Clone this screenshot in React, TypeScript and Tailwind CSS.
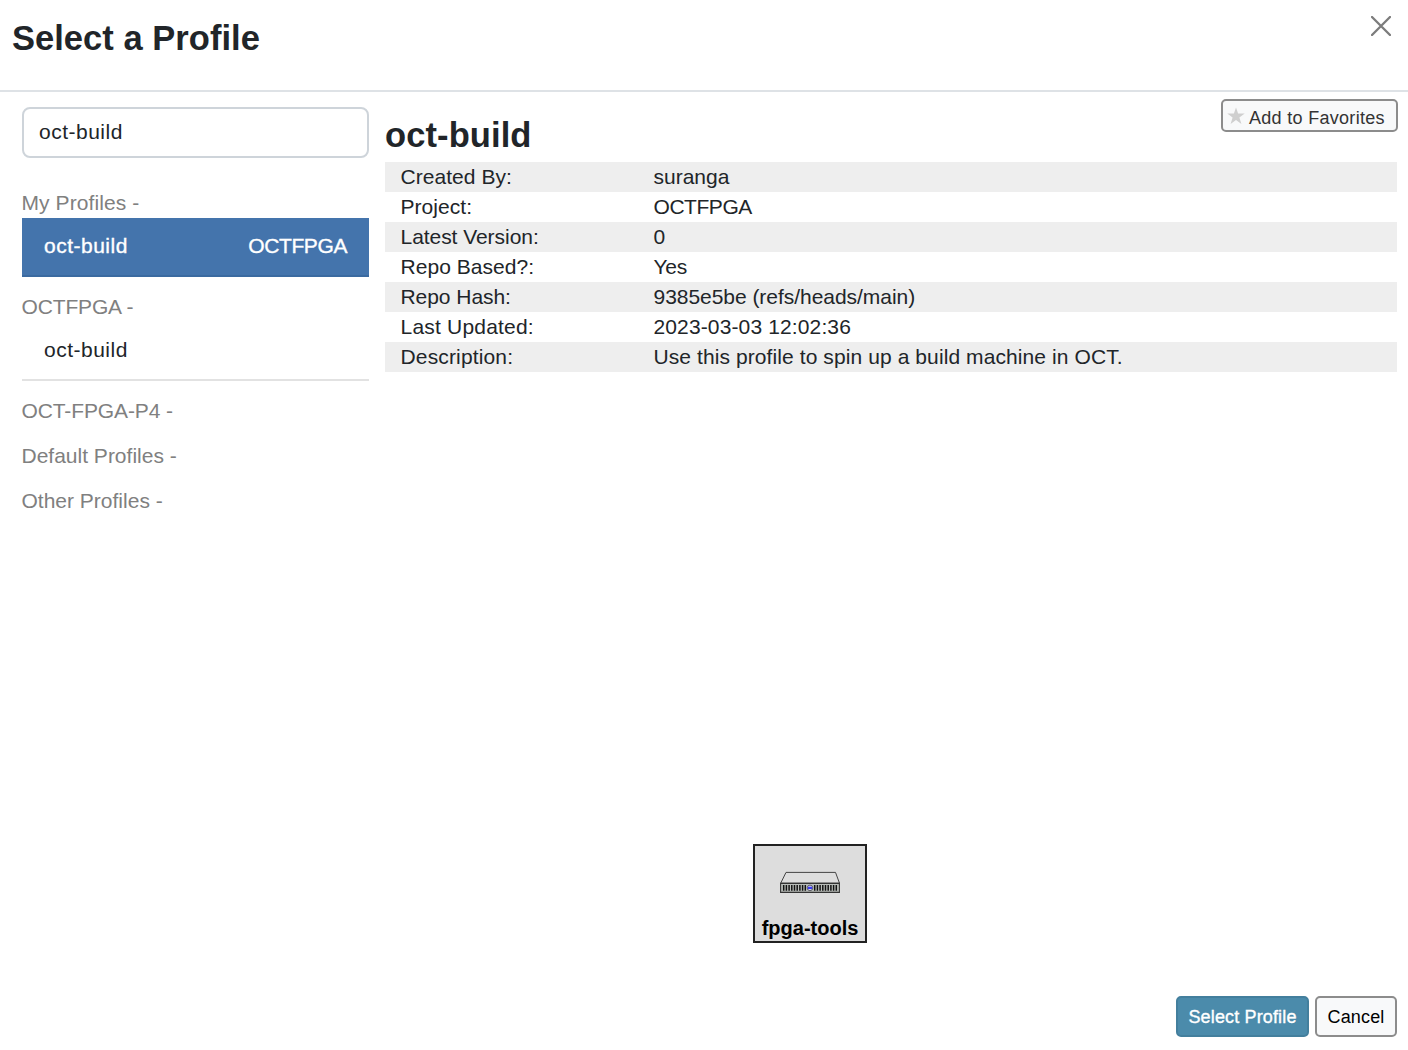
const details = [
  { label: "Created By:", value: "suranga", lt: "tracking-[0.05px]", vt: "tracking-[0px]" },
  { label: "Project:", value: "OCTFPGA", lt: "tracking-[0.05px]", vt: "tracking-[-0.45px]" },
  { label: "Latest Version:", value: "0", lt: "tracking-[-0.05px]", vt: "" },
  { label: "Repo Based?:", value: "Yes", lt: "tracking-[0.05px]", vt: "tracking-[-0.3px]" },
  { label: "Repo Hash:", value: "9385e5be (refs/heads/main)", lt: "tracking-[-0.05px]", vt: "tracking-[-0.04px]" },
  { label: "Last Updated:", value: "2023-03-03 12:02:36", lt: "tracking-[0.2px]", vt: "tracking-[0.13px]" },
  { label: "Description:", value: "Use this profile to spin up a build machine in OCT.", lt: "tracking-[0.15px]", vt: "tracking-[0.09px]" },
];

function Star() {
  return (
    <svg className="h-[18px] w-[18px] shrink-0" viewBox="0 0 18 18" fill="#cfcfcf">
      <path d="M9 .4l2.1 6.2h6.6l-5.3 3.9 2 6.4L9 13.1l-5.4 3.8 2-6.4L.3 6.6h6.6z" />
    </svg>
  );
}

function Server() {
  return (
    <svg className="h-[22px] w-[60px] shrink-0" viewBox="0 0 60 22">
      <path d="M6 1.4h49.5l4 10.8H.7z" fill="#dedede" stroke="#444" strokeWidth="1" />
      <path d="M.6 12.4h58.8v9H.6z" fill="#b9bdb9" stroke="#333" strokeWidth="1.1" />
      {Array.from({ length: 9 }, (_, i) => (
        <path key={i} d={`M${3.7 + i * 2.7} 14v5.8M${34.7 + i * 2.7} 14v5.8`} stroke="#111" strokeWidth="1.5" />
      ))}
      <circle cx="30" cy="16.9" r="2.8" fill="#c8ccf5" stroke="#444" strokeWidth=".8" />
      <path d="M27.8 16.9h4.4" stroke="#3c3cf0" strokeWidth="2.2" />
    </svg>
  );
}

function Group({ children, spacing = "tracking-[0px]" }: { children: string; spacing?: string }) {
  return <div className={`-ml-px h-[30px] pl-[0.5px] leading-[30px] text-[#808080] ${spacing}`}>{children}</div>;
}

export default function App() {
  return (
    <div className="flex h-[1050px] w-[1408px] flex-col overflow-hidden bg-white font-['Liberation_Sans',Arial,sans-serif] text-[21px] text-[#212529]">
      <header className="flex h-[92px] shrink-0 justify-between border-b-2 border-[#dee2e6] pl-3 pr-[17px]">
        <h1 className="pt-4 text-[34.5px] leading-[44px] font-bold tracking-[0.03px]">Select a Profile</h1>
        <button className="mt-4 h-5 w-5" aria-label="Close">
          <svg viewBox="0 0 20 20" className="h-5 w-5" stroke="#7c7c7c" strokeWidth="2.3" strokeLinecap="round">
            <path d="M1 1l18 18M19 1L1 19" />
          </svg>
        </button>
      </header>
      <main className="flex flex-1 pl-[22px] pr-[11px]">
        <aside className="w-[347px] shrink-0 pt-[15px]">
          <input
            className="block h-[51px] w-full rounded-lg border-2 border-[#ced4da] pr-4 pb-[1px] pl-[15px] tracking-[0.5px] outline-none"
            defaultValue="oct-build"
          />
          <div className="pt-[30px]">
            <Group spacing="tracking-[0.08px]">My Profiles -</Group>
            <div className="flex h-[59px] justify-between border-b-2 border-[#3b6aa0] bg-[#4474ac] px-[22px] pt-[13px] leading-[30px] text-white [-webkit-text-stroke:0.35px_white]">
              <span className="tracking-[0.5px]">oct-build</span>
              <span className="tracking-[-0.4px]">OCTFPGA</span>
            </div>
          </div>
          <div className="pt-[15px]">
            <Group spacing="tracking-[-0.15px]">OCTFPGA -</Group>
            <div className="h-[59px] border-b-2 border-[#e2e2e2] px-[22px] pt-[13px] leading-[30px] tracking-[0.5px]">oct-build</div>
          </div>
          <div className="flex flex-col gap-[15px] pt-[15px]">
            <Group spacing="tracking-[-0.12px]">OCT-FPGA-P4 -</Group>
            <Group>Default Profiles -</Group>
            <Group>Other Profiles -</Group>
          </div>
        </aside>
        <section className="ml-4 flex flex-1 flex-col">
          <div className="flex h-[70px] justify-between">
            <h2 className="pt-[21px] text-[34.5px] leading-[44px] font-bold tracking-[0.1px]">oct-build</h2>
            <button className="-mr-px mt-[7px] flex h-[33px] w-[177px] items-center rounded-[5px] border-2 border-[#8c8c8c] bg-[#f8f9fa] pl-[4px] text-[18px] text-[#333]">
              <Star />
              <span className="ml-[4px] pt-[5px] whitespace-nowrap tracking-[0.3px]">Add to Favorites</span>
            </button>
          </div>
          <dl>
            {details.map((d) => (
              <div key={d.label} className="flex h-[30px] pl-[15.5px] leading-[30px] odd:bg-[#eeeeee]">
                <dt className={`w-[253px] ${d.lt}`}>{d.label}</dt>
                <dd className={`whitespace-nowrap ${d.vt}`}>{d.value}</dd>
              </div>
            ))}
          </dl>
          <div className="mt-auto mb-[53px] ml-[368px] flex h-[99px] w-[114px] flex-col items-center border-2 border-[#222] bg-[#dddddd] pt-[25px]">
            <Server />
            <span className="mt-[20px] text-[20px] leading-[30px] font-bold whitespace-nowrap text-black">fpga-tools</span>
          </div>
        </section>
      </main>
      <footer className="flex h-[54px] shrink-0 justify-end gap-1.5 pr-[11px]">
        <button className="h-[41px] w-[133px] rounded-[5px] border-2 border-[#437f9d] bg-[#4b8bab] pt-[2px] text-[18px] tracking-[0.15px] whitespace-nowrap text-white [-webkit-text-stroke:0.35px_white]">Select Profile</button>
        <button className="h-[41px] w-[82px] rounded-[5px] border-2 border-[#8c8c8c] bg-[#f8f9fa] pt-[2px] text-[18px] tracking-[0.15px] text-black">Cancel</button>
      </footer>
    </div>
  );
}
